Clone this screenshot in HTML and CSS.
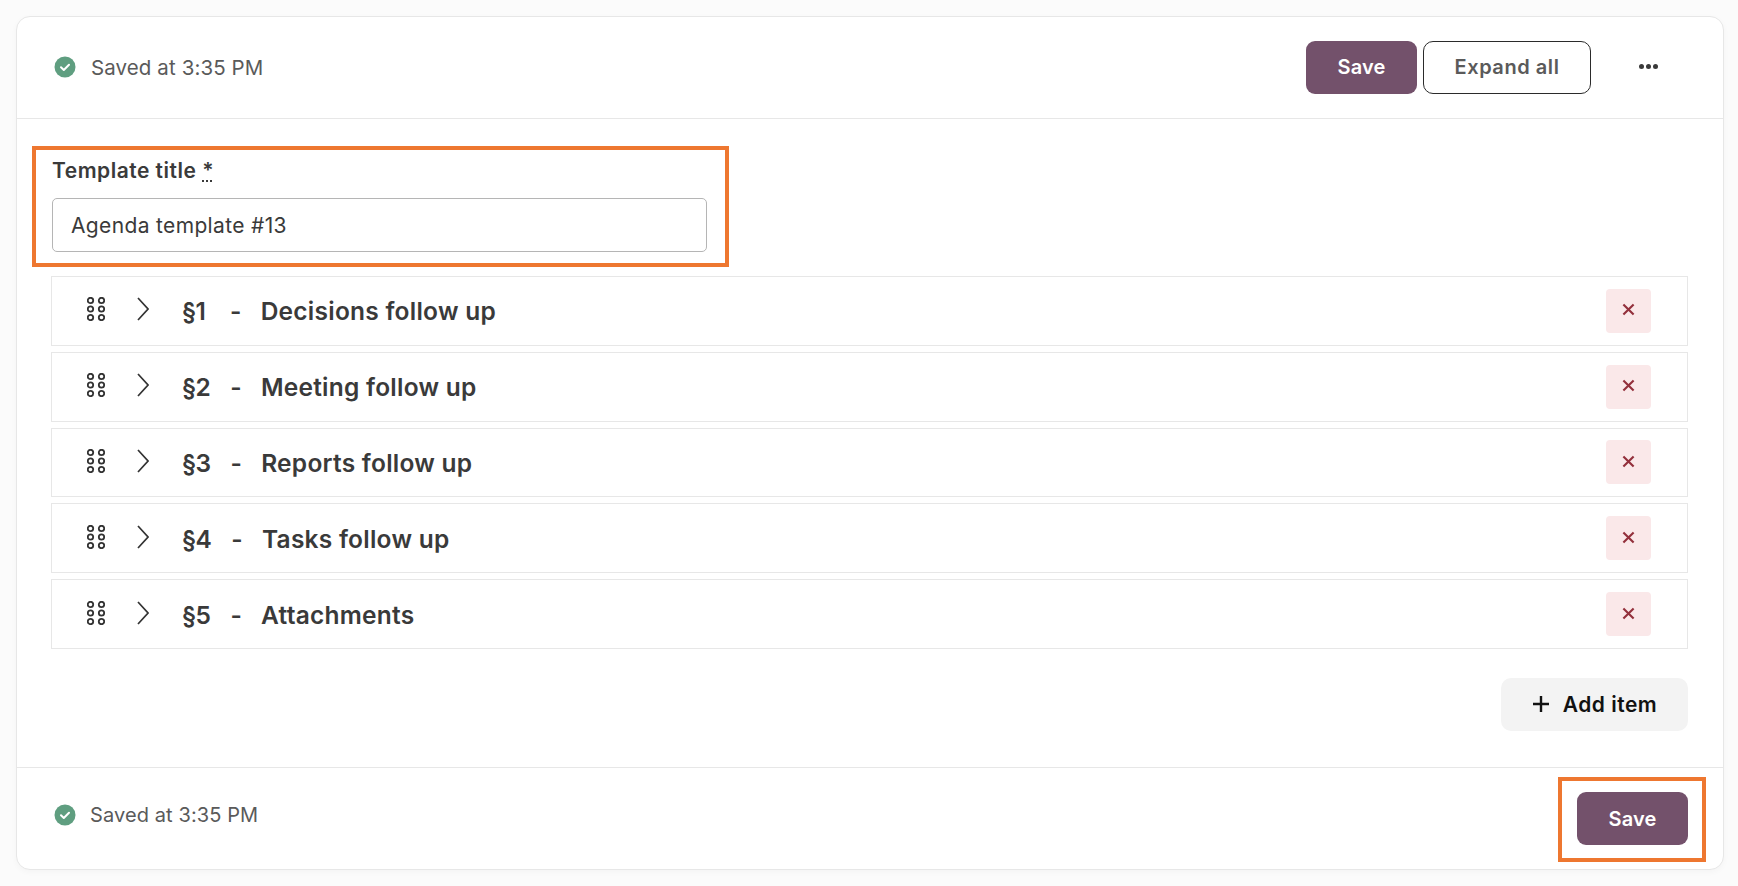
FILE: index.html
```html
<!DOCTYPE html>
<html lang="en">
<head>
<meta charset="utf-8">
<title>Agenda template</title>
<link rel="stylesheet" href="styles.css">
</head>
<body>
<svg class="defs" width="0" height="0" aria-hidden="true">
  <symbol id="check" viewBox="0 0 22 22"><circle cx="11" cy="11" r="10.5" fill="#5f9e80"/><path d="M7 11.3l2.8 2.7 5.2-5.2" fill="none" stroke="#fff" stroke-width="2" stroke-linecap="round" stroke-linejoin="round"/></symbol>
  <symbol id="drag" viewBox="0 0 18 24"><g fill="none" stroke="#333" stroke-width="1.8"><circle cx="3.5" cy="3.5" r="2.7"/><circle cx="14.5" cy="3.5" r="2.7"/><circle cx="3.5" cy="12" r="2.7"/><circle cx="14.5" cy="12" r="2.7"/><circle cx="3.5" cy="20.5" r="2.7"/><circle cx="14.5" cy="20.5" r="2.7"/></g></symbol>
  <symbol id="chev" viewBox="0 0 12 24"><path d="M1 1l10 11L1 23" fill="none" stroke="#333" stroke-width="1.7"/></symbol>
  <symbol id="x" viewBox="0 0 14 14"><path d="M1.5 1.5l11 11M12.5 1.5l-11 11" fill="none" stroke="#93303c" stroke-width="2.3"/></symbol>
</svg>
<div class="card">
  <header class="bar top">
    <div class="status"><svg class="ok"><use href="#check"/></svg><span>Saved at 3:35 PM</span></div>
    <div class="actions">
      <button class="btn primary up">Save</button>
      <button class="btn outline up">Expand all</button>
      <button class="more" aria-label="More"><i></i><i></i><i></i></button>
    </div>
  </header>
  <main class="body">
    <div class="field">
      <span class="mark mark-field"></span>
      <label class="label">Template title <abbr class="req">*</abbr></label>
      <input class="input" value="Agenda template #13">
    </div>
    <div class="rows">
      <div class="row"><svg class="drag"><use href="#drag"/></svg><svg class="chev"><use href="#chev"/></svg><span class="num">§1</span><span class="dash">-</span><span class="name">Decisions follow up</span><button class="del" aria-label="Remove"><svg class="x"><use href="#x"/></svg></button></div>
      <div class="row"><svg class="drag"><use href="#drag"/></svg><svg class="chev"><use href="#chev"/></svg><span class="num">§2</span><span class="dash">-</span><span class="name">Meeting follow up</span><button class="del" aria-label="Remove"><svg class="x"><use href="#x"/></svg></button></div>
      <div class="row"><svg class="drag"><use href="#drag"/></svg><svg class="chev"><use href="#chev"/></svg><span class="num">§3</span><span class="dash">-</span><span class="name">Reports follow up</span><button class="del" aria-label="Remove"><svg class="x"><use href="#x"/></svg></button></div>
      <div class="row"><svg class="drag"><use href="#drag"/></svg><svg class="chev"><use href="#chev"/></svg><span class="num">§4</span><span class="dash">-</span><span class="name">Tasks follow up</span><button class="del" aria-label="Remove"><svg class="x"><use href="#x"/></svg></button></div>
      <div class="row"><svg class="drag"><use href="#drag"/></svg><svg class="chev"><use href="#chev"/></svg><span class="num">§5</span><span class="dash">-</span><span class="name">Attachments</span><button class="del" aria-label="Remove"><svg class="x"><use href="#x"/></svg></button></div>
    </div>
    <div class="add-wrap">
      <button class="add"><svg class="plus" viewBox="0 0 18 18"><path d="M9 1v16M1 9h16" fill="none" stroke="#111" stroke-width="2.4"/></svg>Add item</button>
    </div>
  </main>
  <footer class="bar bottom">
    <div class="status small"><svg class="ok"><use href="#check"/></svg><span>Saved at 3:35 PM</span></div>
    <div class="save-wrap">
      <span class="mark mark-save"></span>
      <button class="btn primary">Save</button>
    </div>
  </footer>
</div>
</body>
</html>
```
FILE: styles.css
```css
* { box-sizing: border-box; }
html, body { margin: 0; height: 100%; }
body {
  padding: 16px 14px 16px 16px;
  background: #fbfbfb;
  font-family: Inter, "Noto Sans", sans-serif;
  color: #3a3a3a;
}
.defs { position: absolute; }
button { font-family: inherit; cursor: pointer; }
.card {
  height: 854px;
  display: flex;
  flex-direction: column;
  background: #fff;
  border: 1px solid #e7e7e7;
  border-radius: 14px;
  box-shadow: 0 2px 6px rgba(0,0,0,.03);
}
.bar {
  display: flex;
  align-items: center;
  justify-content: space-between;
  flex: none;
}
.top { border-bottom: 1px solid #e7e7e7; height: 102px; padding: 0 0 0 37px; }
.bottom { border-top: 1px solid #e7e7e7; height: 102px; padding: 0 35px 0 37px; }
.status {
  display: flex;
  align-items: center;
  gap: 15px;
  font-size: 20.5px;
  letter-spacing: .1px;
  color: #5a5a5a;
  margin-bottom: 1px;
}
.status.small { font-size: 20px; margin-bottom: 8px; gap: 14px; }
.ok { width: 22px; height: 22px; flex: none; }
.actions { display: flex; align-items: center; margin-right: 65px; }
.btn {
  height: 53px;
  border-radius: 9px;
  font-size: 20px;
  font-weight: 600;
  letter-spacing: .1px;
  padding: 0;
}
.up { padding-bottom: 2px; }
.primary { width: 111px; background: #73516b; color: #fff; border: 0; }
.outline { width: 168px; margin-left: 6px; background: #fff; color: #5a5a5a; border: 1.5px solid #2b2b2b; border-radius: 10px; letter-spacing: .55px; }
.more {
  display: flex;
  gap: 2px;
  margin-left: 48px;
  padding: 0;
  background: none;
  border: 0;
  margin-bottom: 2px;
}
.more i { width: 5px; height: 5px; border-radius: 50%; background: #3a3a3a; }
.body {
  flex: 1;
  padding: 39px 35px 0 34px;
}
.field { position: relative; width: 655px; margin-left: 1px; }
.label {
  display: block;
  height: 24px;
  line-height: 26px;
  margin-bottom: 16px;
  font-size: 21px;
  font-weight: 600;
  letter-spacing: .5px;
}
.req { text-decoration: underline dotted; }
.input {
  display: block;
  width: 100%;
  height: 54px;
  padding: 0 18px;
  border: 1px solid #b5b5b5;
  border-radius: 5px;
  font: 21px Inter, sans-serif;
  letter-spacing: .35px;
  color: #3a3a3a;
  background: #fff;
}
.mark { position: absolute; border: 4px solid #ee7730; pointer-events: none; }
.mark-field { left: -20px; top: -12px; right: -22px; bottom: -15px; }
.rows { display: flex; flex-direction: column; gap: 6px; margin-top: 24px; }
.row {
  height: 69.8px;
  display: flex;
  align-items: center;
  padding: 0 36px 0 35px;
  border: 1px solid #e7e7e7;
  font-size: 24.5px;
  font-weight: 600;
  letter-spacing: .25px;
  color: #3a3a3a;
}
.num, .dash, .name { margin-top: 1px; }
.num { min-width: 28px; letter-spacing: -.6px; }
.drag { width: 18px; height: 24px; flex: none; margin-bottom: 3px; }
.chev { width: 12px; height: 24px; flex: none; margin: 0 33px 3px 32px; }
.dash { margin-left: 20px; margin-right: 19px; }
.name { flex: 1; }
.del {
  width: 45px;
  height: 44px;
  display: flex;
  align-items: center;
  justify-content: center;
  background: #fae8e9;
  border: 0;
  border-radius: 4px;
  padding: 0;
}
.x { width: 13px; height: 13px; margin-bottom: 2px; }
.add-wrap { display: flex; justify-content: flex-end; margin-top: 29px; }
.add {
  width: 187px;
  height: 53px;
  display: flex;
  align-items: center;
  justify-content: center;
  gap: 13px;
  background: #f3f3f3;
  border: 0;
  border-radius: 10px;
  font-size: 21px;
  font-weight: 600;
  letter-spacing: .5px;
  color: #111;
  padding: 0;
}
.plus { width: 18px; height: 18px; }
.save-wrap { position: relative; display: flex; }
.mark-save { left: -19px; top: -15px; right: -18px; bottom: -17px; }
```
